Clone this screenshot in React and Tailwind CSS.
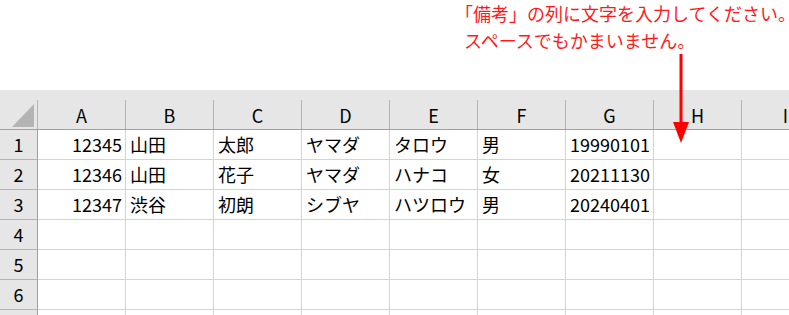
const cols = ['A', 'B', 'C', 'D', 'E', 'F', 'G', 'H', 'I'];

const rows = [
  ['12345', '山田', '太郎', 'ヤマダ', 'タロウ', '男', '19990101'],
  ['12346', '山田', '花子', 'ヤマダ', 'ハナコ', '女', '20211130'],
  ['12347', '渋谷', '初朗', 'シブヤ', 'ハツロウ', '男', '20240401'],
  [],
  [],
  [],
  [],
];

const App = () => {
  return (
    <div className="relative w-[789px] h-[315px] overflow-hidden bg-white text-black font-['Noto_Sans_CJK_JP',sans-serif]">
      {/* note */}
      <div className="h-[90px] text-[18px] text-[#ff1a1a] whitespace-nowrap">
        <div className="pl-[455px] leading-[26px]">「備考」の列に文字を入力してください。</div>
        <div className="pl-[464px] leading-[28px]">スペースでもかまいません。</div>
      </div>

      {/* arrow */}
      <svg className="absolute left-[673px] top-[54px]" width="16" height="89" viewBox="0 0 16 89">
        <rect x="6.5" y="0" width="3" height="70" fill="#ff0000" />
        <polygon points="0,68 16,68 8,89" fill="#ff0000" />
      </svg>

      {/* sheet */}
      <div className="flex flex-col text-[18px]">
        <div className="flex h-[40px] bg-[#e6e6e6] border-b border-[#a0a0a0]">
          <div className="w-[38px] h-full shrink-0 pt-[10px]">
            <div className="h-full border-r border-[#b4b4b4] flex items-end justify-end pr-[3px] pb-[2px]">
              <svg width="22" height="23" viewBox="0 0 22 23">
                <polygon points="22,0 22,23 0,23" fill="#b4b4b4" />
              </svg>
            </div>
          </div>
          {cols.map((c) => (
            <div key={c} className="w-[88px] h-full shrink-0 pt-[10px]">
              <div className="h-full border-r border-[#b4b4b4] flex items-center justify-center leading-none">
                {c}
              </div>
            </div>
          ))}
        </div>

        {rows.map((r, i) => (
          <div key={i} className="flex h-[30px]">
            <div className="w-[38px] shrink-0 bg-[#e6e6e6] border-r border-b border-r-[#9e9e9e] border-b-[#b4b4b4] flex items-center justify-center">
              {i + 1}
            </div>
            {cols.map((c, j) => (
              <div
                key={c}
                className={
                  j === 0
                    ? 'w-[88px] shrink-0 border-r border-b border-[#d4d4d4] flex items-center justify-end pr-[3px] whitespace-nowrap'
                    : 'w-[88px] shrink-0 border-r border-b border-[#d4d4d4] flex items-center pl-[4px] whitespace-nowrap'
                }
              >
                {r[j] || ''}
              </div>
            ))}
          </div>
        ))}
      </div>
    </div>
  );
};

export default App;
